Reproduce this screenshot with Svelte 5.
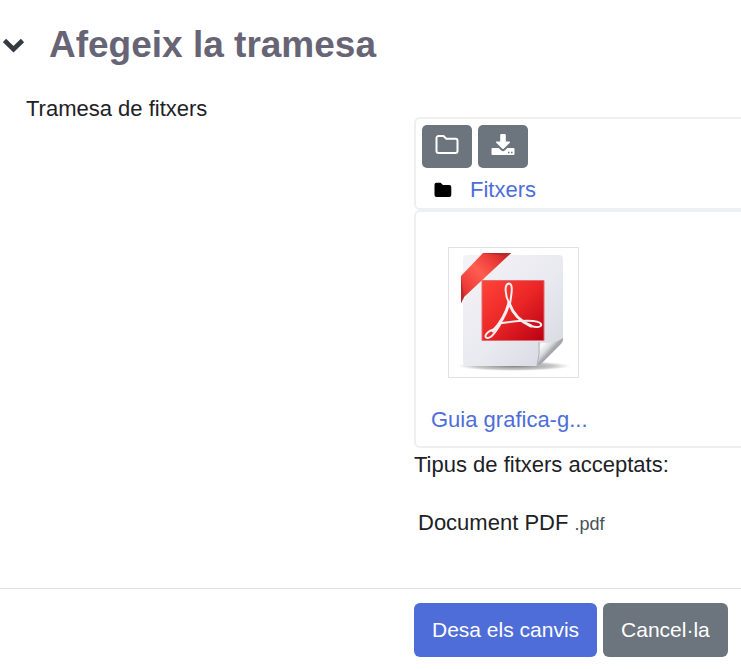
<script>
  let open = $state(true);
  let files = [{ name: "Guia grafica-g..." }];
  let types = [{ label: "Document PDF", ext: ".pdf" }];
</script>

<form class="page" onsubmit={(e) => e.preventDefault()}>
  <header>
    <button type="button" class="toggle" class:closed={!open} aria-label="Afegeix la tramesa" aria-expanded={open} onclick={() => (open = !open)}>
      <svg width="22" height="16" viewBox="0 0 22 16">
        <path d="M1.500 3.500 10.500 12.200 19.500 3.500" fill="none" stroke="#343a40" stroke-width="4.600" />
      </svg>
    </button>
    <h3>Afegeix la tramesa</h3>
  </header>

  {#if open}
    <div class="row">
      <p class="label" id="files-label">Tramesa de fitxers</p>
      <div class="field" role="group" aria-labelledby="files-label">
        <div class="box toolbar">
          <div class="tools">
            <button type="button" class="tool" aria-label="Crea una carpeta">
              <svg width="24" height="20" viewBox="0 0 24 20">
                <path d="M3.500 1h5l2.800 2.800h9.200a2 2 0 0 1 2 2V16a2 2 0 0 1-2 2h-17a2 2 0 0 1-2-2V3a2 2 0 0 1 2-2z" fill="none" stroke="#fff" stroke-width="2" stroke-linejoin="round" />
              </svg>
            </button>
            <button type="button" class="tool" aria-label="Baixa-ho tot">
              <svg width="24" height="22" viewBox="0 0 24 22">
                <path d="M10.200 0h3.600q1 0 1 1v6.500h3.600q1.200.2.400 1.200l-6.100 6q-.7.600-1.400 0l-6.100-6q-.8-1 .4-1.200h3.600V1q0-1 1-1z" fill="#fff" />
                <path d="M1.500 14h6.200l2.300 2.300q2 1.800 4 0l2.300-2.300h6.200q1 0 1 1v5q0 1-1 1h-21q-1 0-1-1v-5q0-1 1-1z" fill="#fff" />
                <path d="M17 18.500h1.500M20 18.500h1.500" stroke="#6c757d" stroke-width="1.300" />
              </svg>
            </button>
          </div>
          <div class="path">
            <svg width="18" height="16" viewBox="0 0 18 16">
              <path d="M2.200.8h4.500l2.200 2.200h6.400q2 0 2 2v8q0 2-2 2H2.500q-2 0-2-2V2.800q0-2 1.700-2z" fill="#000" />
            </svg>
            <a href="#fitxers">Fitxers</a>
          </div>
        </div>

        <div class="box files">
          {#each files as file}
            <a class="file" href="#fitxer">
              <span class="thumb">
                <svg width="129" height="129" viewBox="0 0 129 129">
                  <defs>
                    <linearGradient id="paper" x1="0" y1="0" x2="1" y2="1">
                      <stop offset="0" stop-color="#f3f3f7" />
                      <stop offset=".55" stop-color="#e9e9f0" />
                      <stop offset="1" stop-color="#d5d6e0" />
                    </linearGradient>
                    <linearGradient id="red" x1="0" y1="0" x2="1" y2="1">
                      <stop offset="0" stop-color="#ff4538" />
                      <stop offset=".5" stop-color="#ea2626" />
                      <stop offset="1" stop-color="#b80015" />
                    </linearGradient>
                    <linearGradient id="ribbon" x1="0" y1="1" x2="1" y2="0">
                      <stop offset="0" stop-color="#c9292a" />
                      <stop offset=".2" stop-color="#ed3c38" />
                      <stop offset=".5" stop-color="#ff5c50" />
                      <stop offset=".8" stop-color="#e53532" />
                      <stop offset="1" stop-color="#b52024" />
                    </linearGradient>
                    <linearGradient id="curl" x1="0" y1="0" x2="1" y2="1">
                      <stop offset="0" stop-color="#c4c5cb" />
                      <stop offset=".22" stop-color="#fbfbfb" />
                      <stop offset=".38" stop-color="#dcdde0" />
                      <stop offset=".5" stop-color="#a6a7ac" />
                    </linearGradient>
                    <radialGradient id="shade">
                      <stop offset="0" stop-color="#555" stop-opacity=".75" />
                      <stop offset=".7" stop-color="#777" stop-opacity=".4" />
                      <stop offset="1" stop-color="#999" stop-opacity="0" />
                    </radialGradient>
                  </defs>
                  <ellipse cx="65" cy="118" rx="57" ry="5" fill="url(#shade)" />
                  <path d="M18 7h92q4 0 4 4v81L90 118H18q-4 0-4-4V11q0-4 4-4z" fill="url(#paper)" />
                  <path d="M88 118Q92 106 90 94 104 97 114 90q1 3-3 7L92 116q-2 2-4 2z" fill="url(#curl)" />
                  <path d="M88 118Q91 106 90 94" fill="none" stroke="#aeb0b8" />
                  <path d="M12 55V28L34 5H62L59 8 15 49z" fill="url(#ribbon)" />
                  <path d="M12 55V29l3 20zM34 5h28l-4 3z" fill="#b52b2e" />
                  <path d="M33 32.500h62v60H33z" fill="url(#red)" stroke="#e36b70" />
                  <g fill="none" stroke="#f4eeee" stroke-linecap="round" stroke-linejoin="round">
                    <path d="M60 55C56 47 55 36 60 35.500 65 36 62 48 61 56" stroke-width="2" />
                    <path d="M60 55C57 66 51 76 44 83" stroke-width="3" />
                    <path d="M46 81C38 83 34 89 38 90 42 91 48 82 52 75" stroke-width="2" />
                    <path d="M60 55C64 66 72 74 82 78" stroke-width="3" />
                    <path d="M82 78C88 80 93 79 92 76 90 72 74 72 53 75" stroke-width="2" />
                  </g>
                </svg>
              </span>
              <span class="name">{file.name}</span>
            </a>
          {/each}
        </div>

        <p class="accepted">Tipus de fitxers acceptats:</p>
        <ul>
          {#each types as type}
            <li>{type.label} <small>{type.ext}</small></li>
          {/each}
        </ul>
      </div>
    </div>
  {/if}

  <footer>
    <button type="submit" class="btn primary">Desa els canvis</button>
    <button type="button" class="btn secondary">Cancel·la</button>
  </footer>
</form>

<style>
  :global(body) { margin: 0; background: #fff; }
  .page {
    padding-top: 21px; overflow: hidden;
    font: 22px/32px "Liberation Sans", Arial, sans-serif; color: #1d2125;
  }
  p, h3, ul { margin: 0; }
  a { color: #4e6dd8; text-decoration: none; }
  button { font: inherit; border: 0; padding: 0; cursor: pointer; }
  svg { display: block; }

  header { display: flex; align-items: center; gap: 24px; padding-left: 3px; height: 48px; }
  .toggle { background: none; }
  .toggle.closed { transform: rotate(-90deg); }
  h3 { font-size: 37px; line-height: 48px; font-weight: bold; color: #676475; white-space: nowrap; }

  .row { display: grid; grid-template-columns: 388px 1fr; padding: 24px 0 48px 26px; }
  .field { padding-top: 24px; }
  .box { border: 2px solid #eeeff0; border-right: 0; border-radius: 6px 0 0 6px; }
  .toolbar { padding: 6px 6px 2px; }
  .tools { display: flex; gap: 6px; }
  .tool {
    display: flex; justify-content: center; align-items: center;
    width: 50px; height: 43px; padding-bottom: 4px; box-sizing: border-box;
    border-radius: 5px; background: #6c757d;
  }
  .path { display: flex; align-items: center; gap: 18px; padding: 6px 0 0 12px; }
  .files { padding: 35px 15px 10px; }
  .file { display: inline-block; }
  .thumb { display: block; width: 129px; margin: 0 0 26px 17px; border: 1px solid #dee2e6; }
  .name { display: block; }
  .accepted { padding-top: 1px; }
  ul { list-style: none; padding: 26px 0 0 4px; }
  small { font-size: 18px; color: #495057; }

  footer { display: flex; gap: 6px; padding: 14px 0 12px 414px; border-top: 1px solid #dee2e6; }
  .btn { height: 54px; padding: 0 18px; border-radius: 6px; color: #fff; font-size: 21px; white-space: nowrap; }
  .primary { background: #4e6dd8; }
  .secondary { background: #6c757d; }
</style>
